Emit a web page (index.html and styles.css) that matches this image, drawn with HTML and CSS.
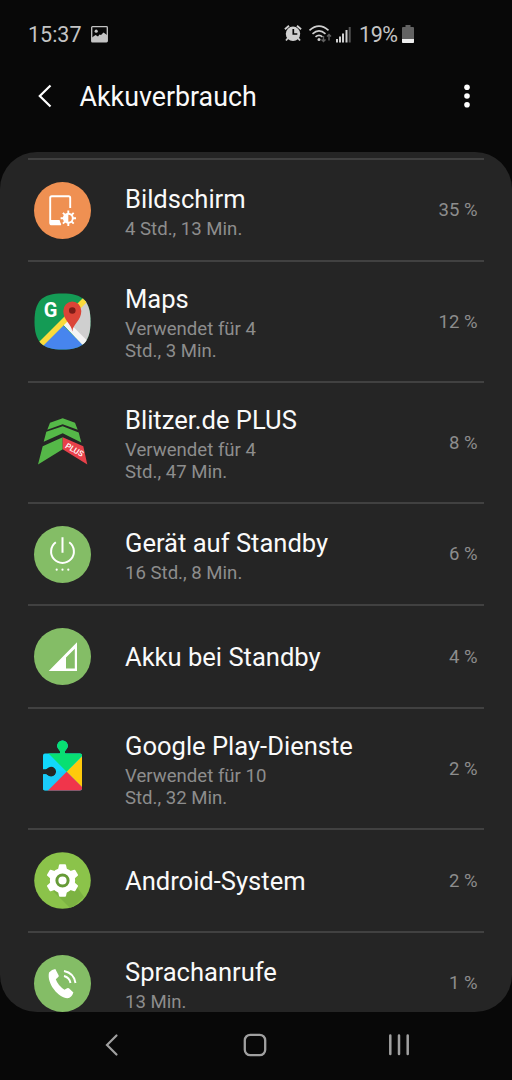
FILE: index.html
```html
<!DOCTYPE html>
<html lang="de">
<head>
<meta charset="utf-8">
<title>Akkuverbrauch</title>
<link rel="stylesheet" href="styles.css">
</head>
<body>
<div class="screen">
  <div class="status">
    <span class="clock">15:37</span>
    <svg class="picture" width="17" height="17" viewBox="0 0 17 17"><rect x=".7" y=".7" width="15.6" height="15.2" rx=".8" fill="none" stroke="#c4c4c4" stroke-width="1.3"/><path d="M1 11.5 4.5 9l2.5 1.5 1.500-2L10 9l2.500-2.500L16 9v7H1z" fill="#c4c4c4"/><circle cx="5.2" cy="5.2" r="1.6" fill="#c4c4c4"/></svg>
    <svg class="signals" width="70" height="20" viewBox="0 0 70 20">
      <g fill="none" stroke="#d0d0d0"><path d="M.9 5.3 5 1.7M13 1.7l4.1 3.6M4 14l-2 2.5M14 14l2 2.5" stroke-width="1.8"/></g>
      <circle cx="9" cy="9.8" r="7.2" fill="#d0d0d0"/><path d="M9.3 5v5h4" fill="none" stroke="#080808" stroke-width="1.7"/>
      <g fill="none" stroke="#d0d0d0" stroke-width="1.6"><path d="M25.5 6.4q9.500-8.500 19 0M28.500 9.800q6.500-5.800 13 0M31.500 12.800q3.500-3 7 0"/></g><circle cx="35" cy="15.400" r="1.500" fill="#d0d0d0"/>
      <path d="M39.500 12v5.500m-2-2 2 2 2-2M45 16.500v-6m-2 2 2-2 2 2" fill="none" stroke="#606060" stroke-width="1.400"/>
      <g fill="#d0d0d0"><path d="M52 15h2v3.500h-2zM55 12.500h2v6h-2zM58 9.500h2v9h-2zM61.500 6h2v12.500h-2z"/><path d="M64.700 3h2v15.500h-2z" fill="#555"/></g>
    </svg>
    <span class="charge">19%</span>
    <svg class="battery" width="13" height="18" viewBox="0 0 13 18"><path d="M3.500 0h5v2H11q1 0 1 1v14q0 1-1 1H1q-1 0-1-1V3q0-1 1-1h2.500z" fill="#626262"/><path d="M0 14h12v3q0 1-1 1H1q-1 0-1-1z" fill="#eee"/></svg>
  </div>
  <header class="header">
    <svg width="16" height="26" viewBox="0 0 16 26"><path d="M13.500 2.500 2.800 13l10.700 10.500" fill="none" stroke="#fff" stroke-width="2.200"/></svg>
    <h1>Akkuverbrauch</h1>
    <svg width="8" height="26" viewBox="0 0 8 26" fill="#fff"><circle cx="4" cy="4.300" r="2.800"/><circle cx="4" cy="13" r="2.800"/><circle cx="4" cy="21.700" r="2.800"/></svg>
  </header>
  <main class="panel">
    <div class="row h102">
      <svg class="icon" viewBox="0 0 57 57"><circle cx="28.500" cy="28.500" r="28.500" fill="#ef9052"/><path d="M36.200 26V15.800q0-1.600-1.600-1.600H17.800q-1.600 0-1.600 1.600v25q0 1.600 1.600 1.600H27" fill="none" stroke="#fff" stroke-width="1.900"/><path d="M16 38h9.500l1.800 5H17.500q-1.500 0-1.500-1.500z" fill="#fff"/><g stroke="#fff" stroke-width="1.900"><path d="M34.300 28.500v3M34.300 40.900v3M26.600 36.200h3M39 36.200h3M28.900 30.800l2.100 2.100M37.600 39.500l2.100 2.100M28.900 41.600l2.100-2.100M37.600 32.900l2.100-2.100"/><circle cx="34.300" cy="36.200" r="4.500" fill="none"/></g><path d="M34.300 32a4.200 4.200 0 0 0 0 8.400z" fill="#fff"/></svg>
      <div class="text two"><div class="name">Bildschirm</div><div class="sub">4 Std., 13 Min.</div></div><div class="pct">35 %</div>
    </div>
    <div class="row h121">
      <svg class="icon" viewBox="0 0 57 57"><defs><clipPath id="tile"><path d="M28.500.5C49 .5 56.500 8 56.500 28.500S49 56.500 28.500 56.500.5 49 .5 28.500 8 .5 28.500.5z"/></clipPath></defs><g clip-path="url(#tile)"><path d="M0 0h57v57H0z" fill="#149b55"/><path d="M53 5 28 30l26 26h3V5z" fill="#cfcfcf"/><path d="M28.500 32 3 57h51z" fill="#4785ee"/><path d="m29 31.500 4-4 22 22-4.500 4.500z" fill="#f4f4f4"/><path d="M3.500 50.500 50 4l4 4L7.500 54.500z" fill="#fadb3c"/></g><path d="M38.300 38.500c-.6-7.500-9-11-9-20.500a9 9.500 0 0 1 18 0c0 9.500-8.400 13-9 20.500z" fill="#db4437"/><circle cx="38.300" cy="17.500" r="3.300" fill="#7b1c17"/><text class="maps-letter" x="16.500" y="23.500" text-anchor="middle">G</text></svg>
      <div class="text two"><div class="name">Maps</div><div class="sub">Verwendet für 4<br>Std., 3 Min.</div></div><div class="pct">12 %</div>
    </div>
    <div class="row h121">
      <svg class="icon" viewBox="0 0 57 57"><path d="m28.700 4.200 12.300 4.600 2.700 7-15-5.600-15.400 5.600L16 8.800zM28.700 12.200l16 6.300 2.600 10-18.600-9.300-19 8.600 2.600-10zM28.700 23.200l-20 9L4 50.500l24.700-15.300z" fill="#55b848"/><path d="m28.700 23.200 20.600 9 4 18.300-24.600-15.300z" fill="#e8414a"/><text class="plus" transform="translate(30.500 33.500) rotate(29) skewX(-5)">PLUS</text></svg>
      <div class="text two"><div class="name">Blitzer.de PLUS</div><div class="sub">Verwendet für 4<br>Std., 47 Min.</div></div><div class="pct">8 %</div>
    </div>
    <div class="row h102">
      <svg class="icon" viewBox="0 0 57 57"><circle cx="28.500" cy="28.500" r="28.500" fill="#84bd66"/><path d="M21.800 16.300a11.400 11.400 0 1 0 13.400 0M28.500 11.300v15.500" fill="none" stroke="#fff" stroke-width="2"/><g fill="#fff"><circle cx="22.700" cy="43.700" r="1.100"/><circle cx="28.500" cy="43.700" r="1.100"/><circle cx="34.300" cy="43.700" r="1.100"/></g></svg>
      <div class="text two"><div class="name">Gerät auf Standby</div><div class="sub">16 Std., 8 Min.</div></div><div class="pct">6 %</div>
    </div>
    <div class="row h103">
      <svg class="icon" viewBox="0 0 57 57"><circle cx="28.500" cy="28.500" r="28.500" fill="#84bd66"/><path d="M14.700 43 43 14.300V43zM32 29.500v11h8.800V20.700z" fill="#fff" fill-rule="evenodd"/></svg>
      <div class="text"><div class="name">Akku bei Standby</div></div><div class="pct">4 %</div>
    </div>
    <div class="row h121">
      <svg class="icon" viewBox="0 0 57 57"><defs><clipPath id="piece"><path d="M11 13.500h14.700q1-2-.5-3.500a5.300 5.300 0 1 1 6.600 0q-1.500 1.500-.5 3.500H46q2 0 2 2v33q0 2-2 2H11q-2 0-2-2V34.300h2.500q1 0 2 1a5 5 0 1 0 0-7q-1 1-2 1H9V15.500q0-2 2-2z"/></clipPath></defs><g clip-path="url(#piece)"><path d="M0 0h57v57H0z" fill="#11d8fb"/><path d="M10 30 32.700 31.800 14 50.500H9V40z" fill="#1acbfa"/><path d="M14 13 32.700 31.800 50 14V0H14z" fill="#08df72"/><path d="m32.700 31.800 17-17V49z" fill="#ffca0b"/><path d="M32.700 31.800 13.500 51H52z" fill="#f0354b"/></g></svg>
      <div class="text two"><div class="name">Google Play-Dienste</div><div class="sub">Verwendet für 10<br>Std., 32 Min.</div></div><div class="pct">2 %</div>
    </div>
    <div class="row h103">
      <svg class="icon" viewBox="0 0 57 57"><defs><clipPath id="disc"><circle cx="28.500" cy="28.500" r="28.300"/></clipPath></defs><g clip-path="url(#disc)"><path d="M0 0h57v57H0z" fill="#8bc34a"/><path d="m18 38 19 19 13-12-7-10z" fill="#7cb342"/></g><g fill="#fff"><circle cx="28.500" cy="28.500" r="12.600"/><path id="tooth" d="m25 13-1.500 7h10L32 13q-.1-.8-1-.8h-5q-.9 0-1 .8z"/><use href="#tooth" transform="rotate(60 28.500 28.500)"/><use href="#tooth" transform="rotate(120 28.500 28.500)"/><use href="#tooth" transform="rotate(180 28.500 28.500)"/><use href="#tooth" transform="rotate(240 28.500 28.500)"/><use href="#tooth" transform="rotate(300 28.500 28.500)"/></g><circle cx="28.500" cy="28.500" r="5.600" fill="#fff" stroke="#669b37" stroke-width="3"/></svg>
      <div class="text"><div class="name">Android-System</div></div><div class="pct">2 %</div>
    </div>
    <div class="row h102">
      <svg class="icon" viewBox="0 0 57 57"><circle cx="28.500" cy="28.500" r="28.500" fill="#84bd66"/><path d="M15 17.500q3-3.500 6.300-3.500l3.400 6.500q.3 1-.7 1.800l-2.200 2q2.200 6.400 8.700 10.400l2.600-1.500q1-.6 1.800.1l4.500 4.200q-1.600 5-6 5.800C25 43 12.500 29 15 17.500z" fill="#fff"/><path d="M30 16q10 2 11.500 12M30 21q5.500 1.500 6.500 7" fill="none" stroke="#fff" stroke-width="1.900"/></svg>
      <div class="text two"><div class="name">Sprachanrufe</div><div class="sub">13 Min.</div></div><div class="pct">1 %</div>
    </div>
  </main>
  <nav class="nav">
    <svg width="16" height="24" viewBox="0 0 16 24"><path d="M12.500 2.500 3 12l9.500 9.500" fill="none" stroke="#a0a0a0" stroke-width="2.200" stroke-linecap="round"/></svg>
    <svg class="home" width="24" height="24" viewBox="0 0 24 24"><rect x="1.800" y="1.800" width="20.400" height="20.400" rx="5.500" fill="none" stroke="#a0a0a0" stroke-width="2.300"/></svg>
    <svg width="24" height="24" viewBox="0 0 24 24"><path d="M3.300 2.500v18.500M12 2.500v18.500M20.700 2.500v18.500" fill="none" stroke="#a0a0a0" stroke-width="2.500" stroke-linecap="round"/></svg>
  </nav>
</div>
</body>
</html>
```
FILE: styles.css
```css
* { box-sizing: border-box; }
body { margin: 0; background: #080808; color: #fafafa; font-family: Roboto, sans-serif; }
svg { display: block; flex: none; }
.screen { width: 512px; height: 1080px; display: flex; flex-direction: column; overflow: hidden; background: #080808; }
.status { height: 66px; display: flex; align-items: center; padding: 2px 97px 0 28px; color: #c4c4c4; font-size: 21.500px; }
.clock { width: 63px; }
.signals { margin-left: 176px; }
.charge { margin-left: 5px; width: 41px; letter-spacing: -.4px; }
.battery { margin-left: 2px; }
.header { height: 86px; display: flex; align-items: center; padding: 0 41.500px 27px 36.500px; }
.header h1 { margin: 2px 0 0 27px; flex: 1; font-size: 26.800px; font-weight: 400; line-height: 30px; }
.panel { height: 860px; padding: 6px 28px 0; border-radius: 37px; background: #252525; overflow: hidden; }
.row { display: flex; align-items: center; padding: 0 6.500px 0 6px; border-top: 2px solid #414141; }
.h102 { height: 102px; }
.h103 { height: 103px; }
.h121 { height: 121px; }
.icon { width: 57px; height: 57px; overflow: visible; }
.text { flex: 1; padding-left: 34px; white-space: nowrap; }
.two { padding-top: 3px; }
.name { font-size: 25.550px; line-height: 30px; }
.sub { color: #8d8d8d; font-size: 18.600px; line-height: 22px; margin-top: 4px; }
.pct { color: #8d8d8d; font-size: 18.500px; }
.maps-letter { font: 700 20px Roboto, sans-serif; fill: #fff; }
.plus { font: 500 8px Roboto, sans-serif; fill: #fff; }
.nav { flex: 1; display: flex; align-items: center; justify-content: space-between; padding: 0 101px 3px 104px; }
.home { margin-left: 2px; }
```
